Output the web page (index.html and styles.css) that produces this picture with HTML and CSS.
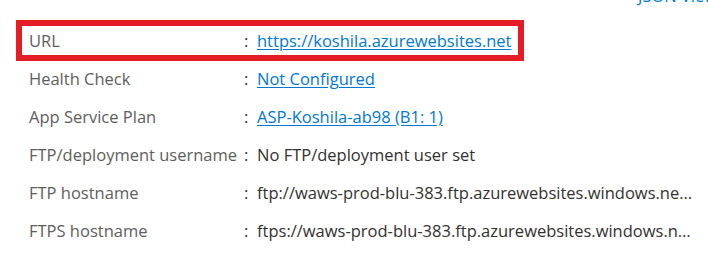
FILE: index.html
```html
<!DOCTYPE html>
<html>
<head>
<meta charset="utf-8">
<link rel="stylesheet" href="styles.css">
</head>
<body>
<div class="panel">
  <div class="toolbar"><a class="json-link" href="#">JSON View</a></div>
  <div class="props">
    <div class="row highlighted">
      <span class="label">URL</span><span class="colon">:</span>
      <span class="value"><a href="#">https://koshila.azurewebsites.net</a></span>
    </div>
    <div class="row">
      <span class="label">Health Check</span><span class="colon">:</span>
      <span class="value"><a href="#">Not Configured</a></span>
    </div>
    <div class="row">
      <span class="label">App Service Plan</span><span class="colon">:</span>
      <span class="value"><a href="#">ASP-Koshila-ab98 (B1: 1)</a></span>
    </div>
    <div class="row">
      <span class="label">FTP/deployment username</span><span class="colon">:</span>
      <span class="value">No FTP/deployment user set</span>
    </div>
    <div class="row">
      <span class="label">FTP hostname</span><span class="colon">:</span>
      <span class="value">ftp://waws-prod-blu-383.ftp.azurewebsites.windows.net/site/wwwroot</span>
    </div>
    <div class="row">
      <span class="label">FTPS hostname</span><span class="colon">:</span>
      <span class="value">ftps://waws-prod-blu-383.ftp.azurewebsites.windows.net/site/wwwroot</span>
    </div>
  </div>
</div>
</body>
</html>
```
FILE: styles.css
```css
html, body {
  margin: 0;
  padding: 0;
  background: #ffffff;
}
body {
  font-family: "Open Sans", "Noto Sans", sans-serif;
  font-size: 16.5px;
  color: #323130;
  overflow: hidden;
}
.panel {
  width: 708px;
  height: 270px;
}
.toolbar {
  display: flex;
  justify-content: flex-start;
  padding-left: 638px;
  height: 20px;
  margin-top: -14px;
  line-height: 20px;
  white-space: nowrap;
  overflow: hidden;
}
.json-link {
  color: #0078d4;
  text-decoration: none;
}
.props {
  padding-top: 16px;
  padding-left: 29px;
  padding-right: 14px;
}
.row {
  position: relative;
  display: grid;
  grid-template-columns: 215px 13px minmax(0, 1fr);
  align-items: center;
  height: 38px;
  line-height: 22px;
}
.label {
  color: #605e5c;
  white-space: nowrap;
}
.colon {
  color: #323130;
}
.value {
  white-space: nowrap;
  overflow: hidden;
  text-overflow: ellipsis;
}
.value a {
  color: #0078d4;
  text-decoration: underline;
  text-underline-offset: 2px;
}
.highlighted::after {
  content: "";
  position: absolute;
  left: -13px;
  top: -2px;
  width: 496px;
  height: 29px;
  border: 6px solid #e31c25;
  pointer-events: none;
}
```
